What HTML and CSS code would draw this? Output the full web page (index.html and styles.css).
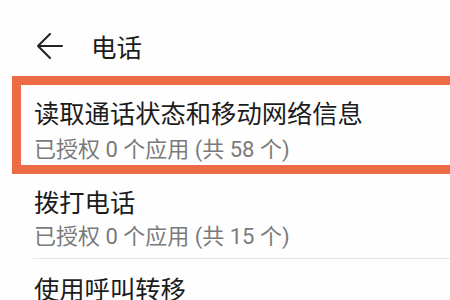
FILE: index.html
```html
<!DOCTYPE html>
<html lang="zh-CN">
<head>
<meta charset="utf-8">
<link rel="stylesheet" href="styles.css">
</head>
<body>
<div class="page">
  <header class="header">
    <svg class="back" width="26" height="26" viewBox="0 0 26 26" fill="none" stroke="#222" stroke-width="2" stroke-linecap="round" stroke-linejoin="round">
      <path d="M13 1 L1 13 L13 25 M1 13 H25"/>
    </svg>
    <h1 class="title">电话</h1>
  </header>
  <div class="item highlighted">
    <div class="item-title">读取通话状态和移动网络信息</div>
    <div class="item-sub">已授权 0 个应用 (共 58 个)</div>
  </div>
  <div class="item plain divided">
    <div class="item-title">拨打电话</div>
    <div class="item-sub">已授权 0 个应用 (共 15 个)</div>
  </div>
  <div class="item plain last">
    <div class="item-title">使用呼叫转移</div>
  </div>
</div>
</body>
</html>
```
FILE: styles.css
```css
html, body {
  margin: 0;
  padding: 0;
  background: #fefefe;
}
body {
  font-family: "Noto Sans CJK SC", "Noto Sans", sans-serif;
  width: 450px;
  height: 300px;
  overflow: hidden;
}
.page {
  display: flex;
  flex-direction: column;
}
.header {
  display: flex;
  align-items: center;
  height: 32px;
  padding: 30px 0 0 37px;
  margin-bottom: 14px;
}
.back {
  display: block;
  flex: none;
}
.title {
  margin: 0 0 0 28px;
  font-size: 25.5px;
  font-weight: 400;
  line-height: 32px;
  color: #1c1c1c;
}
.item-title {
  font-size: 25.3px;
  line-height: 32px;
  color: #1c1c1c;
  white-space: nowrap;
}
.item-sub {
  font-family: Roboto, "Noto Sans CJK SC", sans-serif;
  font-size: 22px;
  line-height: 24px;
  color: #7a7a7a;
  white-space: nowrap;
}
.highlighted {
  margin-left: 12px;
  margin-right: -30px;
  border: 9px solid #ec6a44;
  padding: 11px 0 0 13px;
  height: 69px;
}
.highlighted .item-sub {
  margin-top: 10px;
}
.plain {
  margin-left: 33px;
}
.divided {
  padding: 11px 0 9px 1px;
  border-bottom: 1px solid #e6e6e6;
}
.divided .item-sub {
  margin-top: 8px;
}
.last {
  padding: 13px 0 0 1px;
}
```
